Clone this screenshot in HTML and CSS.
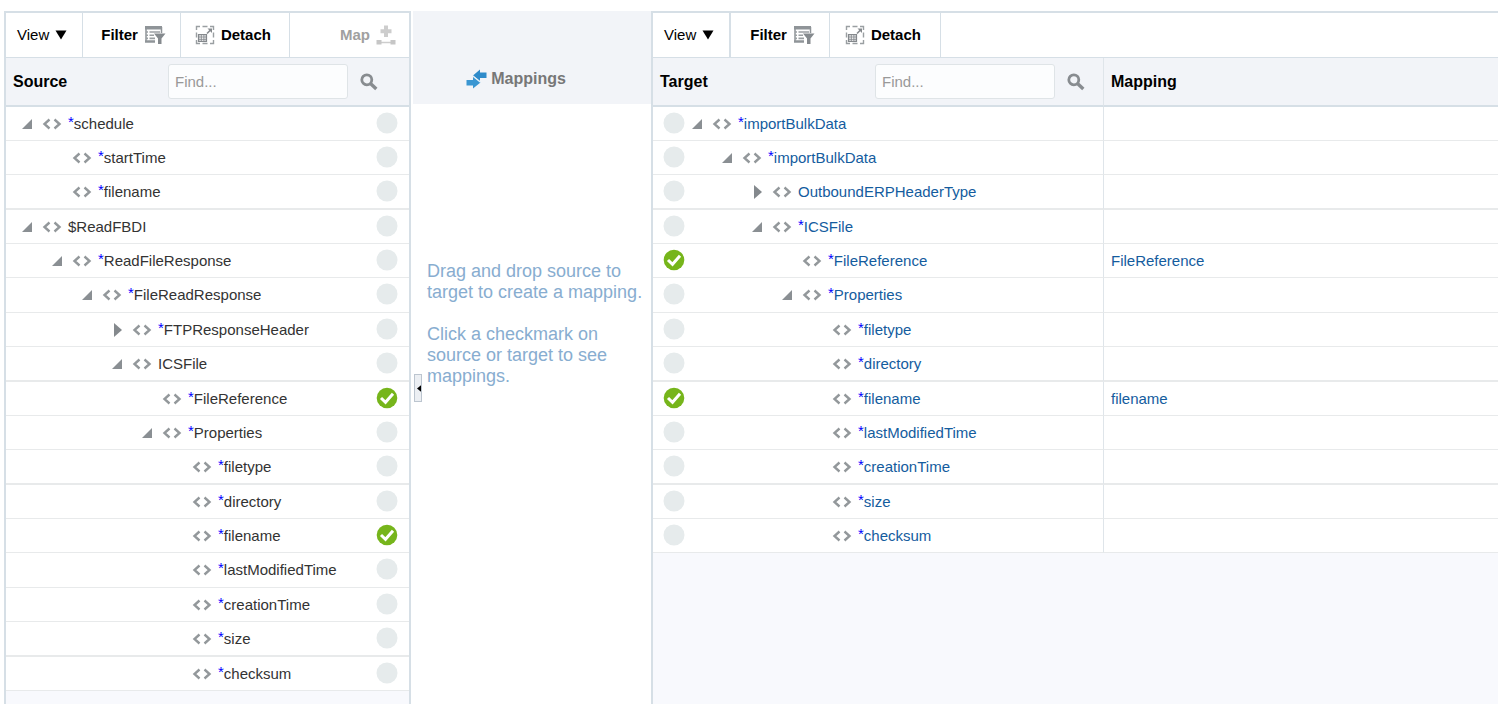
FILE: index.html
```html
<!DOCTYPE html>
<html lang="en">
<head>
<meta charset="utf-8">
<title>Mappings</title>
<link rel="stylesheet" href="styles.css">
</head>
<body>
<svg class="sprite" aria-hidden="true">
  <symbol id="open" viewBox="0 0 12 12"><path d="M1 11L11 1V11Z" fill="#8a8f93"/></symbol>
  <symbol id="closed" viewBox="0 0 12 14"><path d="M3 0L11 7L3 14Z" fill="#84898d"/></symbol>
  <symbol id="code" viewBox="0 0 20 12"><path d="M7.500 1.500L2.500 6L7.500 10.500M12.500 1.500L17.500 6L12.500 10.500" fill="none" stroke="#93989b" stroke-width="2.400"/></symbol>
  <symbol id="empty" viewBox="0 0 22 22"><circle cx="11" cy="11" r="10.500" fill="#e6ebec"/></symbol>
  <symbol id="check" viewBox="0 0 22 22"><circle cx="11" cy="11" r="10.300" fill="#76b51b"/><path d="M5 11L9.500 15.300L17 6.800" fill="none" stroke="#fff" stroke-width="3"/></symbol>
  <symbol id="search" viewBox="0 0 18 18"><circle cx="6.800" cy="6.800" r="5" fill="none" stroke="#888c90" stroke-width="2.800"/><path d="M10.500 10.500L16.300 16" stroke="#888c90" stroke-width="3.400"/></symbol>
  <symbol id="caret" viewBox="0 0 12 10"><path d="M0.500 0.500H11.500L6 9.500Z" fill="#000"/></symbol>
  <symbol id="filter" viewBox="0 0 22 20"><path d="M1 1H18V4.500H1Z" fill="#8f9498"/><path d="M2 2V17M17.500 2V8" fill="none" stroke="#8f9498" stroke-width="1.500"/><path d="M1 16.500H11" stroke="#8f9498" stroke-width="2.500"/><path d="M5.500 7H16M5.500 10.200H10M5.500 13.400H11" stroke="#9a9fa2" stroke-width="1.600"/><path d="M2 7H4M2 10.200H4M2 13.400H4" stroke="#9a9fa2" stroke-width="1.600"/><path d="M10 8.500H21.500L17.500 13.500V19H14V13.500Z" fill="#858a8e"/></symbol>
  <symbol id="detach" viewBox="0 0 20 20"><path d="M1.500 5V1.500H5M15 1.500H18.500V5M18.500 15V18.500H15M5 18.500H1.500V15M7.500 1.500H12.500M7.500 18.500H12.500M1.500 7.500V12.500M18.500 7.500V12.500" fill="none" stroke="#9a9fa2" stroke-width="1.400"/><path d="M3.600 9.600H11.400V16.400H3.600Z" fill="none" stroke="#85898d" stroke-width="1.400"/><path d="M3.500 12H11.500M3.500 14.300H11.500M6.300 10V16.500M8.900 10V16.500" fill="none" stroke="#85898d" stroke-width="0.900"/><path d="M12 8.500L15.500 5" stroke="#85898d" stroke-width="1.600"/><path d="M12.500 3.500H17V8Z" fill="#85898d"/></symbol>
  <symbol id="map" viewBox="0 0 20 20"><path d="M10 0.500V12M4.500 6.200H15.500" stroke="#cdcdcd" stroke-width="4"/><path d="M4 17.500H16" stroke="#cdcdcd" stroke-width="1.500"/><path d="M0.500 15H5.500V19.500H0.500ZM14.500 15H19.500V19.500H14.500Z" fill="#c6c6c6"/></symbol>
  <symbol id="arrows" viewBox="0 0 21 20"><path d="M20.500 3.500H14V0.500L7 6.500L14 12V9H20.500Z" fill="#2f8bca"/><path d="M0.500 11H7V7.500L14.500 13.500L7 19.500V16.500H0.500Z" fill="#3a96d2"/><path d="M6.500 6.800L14.500 13.200" stroke="#e6f0f8" stroke-width="1.200"/></symbol>
</svg>
<main class="mapper">
  <section class="panel source" aria-label="Source">
    <div class="toolbar">
      <button class="tool view">View <svg class="i-caret"><use href="#caret"/></svg></button>
      <button class="tool filter">Filter <svg class="i-filter"><use href="#filter"/></svg></button>
      <button class="tool detach"><svg class="i-tool"><use href="#detach"/></svg> Detach</button>
      <button class="tool map" disabled>Map <svg class="i-tool"><use href="#map"/></svg></button>
    </div>
    <table class="tree">
      <colgroup><col><col class="col-mark"></colgroup>
      <thead>
        <tr><th colspan="2"><div class="head"><label for="find-source">Source</label><input id="find-source" class="find" type="text" placeholder="Find..."><button class="go" aria-label="Search source"><svg class="i-search"><use href="#search"/></svg></button></div></th></tr>
      </thead>
      <tbody>
        <tr><td><div class="node d0"><button class="toggle" aria-label="Collapse"><svg><use href="#open"/></svg></button><svg class="i-code"><use href="#code"/></svg><span><i>*</i>schedule</span></div></td><td><svg class="mark"><use href="#empty"/></svg></td></tr>
        <tr><td><div class="node d1"><span class="toggle"></span><svg class="i-code"><use href="#code"/></svg><span><i>*</i>startTime</span></div></td><td><svg class="mark"><use href="#empty"/></svg></td></tr>
        <tr><td><div class="node d1"><span class="toggle"></span><svg class="i-code"><use href="#code"/></svg><span><i>*</i>filename</span></div></td><td><svg class="mark"><use href="#empty"/></svg></td></tr>
        <tr><td><div class="node d0"><button class="toggle" aria-label="Collapse"><svg><use href="#open"/></svg></button><svg class="i-code"><use href="#code"/></svg><span>$ReadFBDI</span></div></td><td><svg class="mark"><use href="#empty"/></svg></td></tr>
        <tr><td><div class="node d1"><button class="toggle" aria-label="Collapse"><svg><use href="#open"/></svg></button><svg class="i-code"><use href="#code"/></svg><span><i>*</i>ReadFileResponse</span></div></td><td><svg class="mark"><use href="#empty"/></svg></td></tr>
        <tr><td><div class="node d2"><button class="toggle" aria-label="Collapse"><svg><use href="#open"/></svg></button><svg class="i-code"><use href="#code"/></svg><span><i>*</i>FileReadResponse</span></div></td><td><svg class="mark"><use href="#empty"/></svg></td></tr>
        <tr><td><div class="node d3"><button class="toggle" aria-label="Expand"><svg><use href="#closed"/></svg></button><svg class="i-code"><use href="#code"/></svg><span><i>*</i>FTPResponseHeader</span></div></td><td><svg class="mark"><use href="#empty"/></svg></td></tr>
        <tr><td><div class="node d3"><button class="toggle" aria-label="Collapse"><svg><use href="#open"/></svg></button><svg class="i-code"><use href="#code"/></svg><span>ICSFile</span></div></td><td><svg class="mark"><use href="#empty"/></svg></td></tr>
        <tr><td><div class="node d4"><span class="toggle"></span><svg class="i-code"><use href="#code"/></svg><span><i>*</i>FileReference</span></div></td><td><button class="mapped" aria-label="Show mapping"><svg class="mark"><use href="#check"/></svg></button></td></tr>
        <tr><td><div class="node d4"><button class="toggle" aria-label="Collapse"><svg><use href="#open"/></svg></button><svg class="i-code"><use href="#code"/></svg><span><i>*</i>Properties</span></div></td><td><svg class="mark"><use href="#empty"/></svg></td></tr>
        <tr><td><div class="node d5"><span class="toggle"></span><svg class="i-code"><use href="#code"/></svg><span><i>*</i>filetype</span></div></td><td><svg class="mark"><use href="#empty"/></svg></td></tr>
        <tr><td><div class="node d5"><span class="toggle"></span><svg class="i-code"><use href="#code"/></svg><span><i>*</i>directory</span></div></td><td><svg class="mark"><use href="#empty"/></svg></td></tr>
        <tr><td><div class="node d5"><span class="toggle"></span><svg class="i-code"><use href="#code"/></svg><span><i>*</i>filename</span></div></td><td><button class="mapped" aria-label="Show mapping"><svg class="mark"><use href="#check"/></svg></button></td></tr>
        <tr><td><div class="node d5"><span class="toggle"></span><svg class="i-code"><use href="#code"/></svg><span><i>*</i>lastModifiedTime</span></div></td><td><svg class="mark"><use href="#empty"/></svg></td></tr>
        <tr><td><div class="node d5"><span class="toggle"></span><svg class="i-code"><use href="#code"/></svg><span><i>*</i>creationTime</span></div></td><td><svg class="mark"><use href="#empty"/></svg></td></tr>
        <tr><td><div class="node d5"><span class="toggle"></span><svg class="i-code"><use href="#code"/></svg><span><i>*</i>size</span></div></td><td><svg class="mark"><use href="#empty"/></svg></td></tr>
        <tr><td><div class="node d5"><span class="toggle"></span><svg class="i-code"><use href="#code"/></svg><span><i>*</i>checksum</span></div></td><td><svg class="mark"><use href="#empty"/></svg></td></tr>
      </tbody>
    </table>
  </section>

  <section class="middle" aria-label="Mappings">
    <h2 class="middle-head"><svg class="i-arrows"><use href="#arrows"/></svg>Mappings</h2>
    <div class="middle-body">
      <button class="collapse" aria-label="Collapse source"><svg viewBox="0 0 5 8"><path d="M5 0V8L0 4Z"/></svg></button>
      <div class="hint">
        <p>Drag and drop source to target to create a mapping.</p>
        <p>Click a checkmark on source or target to see mappings.</p>
      </div>
    </div>
  </section>

  <section class="panel target" aria-label="Target">
    <div class="toolbar">
      <button class="tool view">View <svg class="i-caret"><use href="#caret"/></svg></button>
      <button class="tool filter">Filter <svg class="i-filter"><use href="#filter"/></svg></button>
      <button class="tool detach"><svg class="i-tool"><use href="#detach"/></svg> Detach</button>
    </div>
    <table class="tree">
      <colgroup><col class="col-mark"><col class="col-name"><col></colgroup>
      <thead>
        <tr><th colspan="2"><div class="head"><label for="find-target">Target</label><input id="find-target" class="find" type="text" placeholder="Find..."><button class="go" aria-label="Search target"><svg class="i-search"><use href="#search"/></svg></button></div></th><th class="mapping">Mapping</th></tr>
      </thead>
      <tbody>
        <tr><td><svg class="mark"><use href="#empty"/></svg></td><td><div class="node d0"><button class="toggle" aria-label="Collapse"><svg><use href="#open"/></svg></button><svg class="i-code"><use href="#code"/></svg><a href="#"><i>*</i>importBulkData</a></div></td><td class="mapping"></td></tr>
        <tr><td><svg class="mark"><use href="#empty"/></svg></td><td><div class="node d1"><button class="toggle" aria-label="Collapse"><svg><use href="#open"/></svg></button><svg class="i-code"><use href="#code"/></svg><a href="#"><i>*</i>importBulkData</a></div></td><td class="mapping"></td></tr>
        <tr><td><svg class="mark"><use href="#empty"/></svg></td><td><div class="node d2"><button class="toggle" aria-label="Expand"><svg><use href="#closed"/></svg></button><svg class="i-code"><use href="#code"/></svg><a href="#">OutboundERPHeaderType</a></div></td><td class="mapping"></td></tr>
        <tr><td><svg class="mark"><use href="#empty"/></svg></td><td><div class="node d2"><button class="toggle" aria-label="Collapse"><svg><use href="#open"/></svg></button><svg class="i-code"><use href="#code"/></svg><a href="#"><i>*</i>ICSFile</a></div></td><td class="mapping"></td></tr>
        <tr><td><button class="mapped" aria-label="Show mapping"><svg class="mark"><use href="#check"/></svg></button></td><td><div class="node d3"><span class="toggle"></span><svg class="i-code"><use href="#code"/></svg><a href="#"><i>*</i>FileReference</a></div></td><td class="mapping"><a href="#">FileReference</a></td></tr>
        <tr><td><svg class="mark"><use href="#empty"/></svg></td><td><div class="node d3"><button class="toggle" aria-label="Collapse"><svg><use href="#open"/></svg></button><svg class="i-code"><use href="#code"/></svg><a href="#"><i>*</i>Properties</a></div></td><td class="mapping"></td></tr>
        <tr><td><svg class="mark"><use href="#empty"/></svg></td><td><div class="node d4"><span class="toggle"></span><svg class="i-code"><use href="#code"/></svg><a href="#"><i>*</i>filetype</a></div></td><td class="mapping"></td></tr>
        <tr><td><svg class="mark"><use href="#empty"/></svg></td><td><div class="node d4"><span class="toggle"></span><svg class="i-code"><use href="#code"/></svg><a href="#"><i>*</i>directory</a></div></td><td class="mapping"></td></tr>
        <tr><td><button class="mapped" aria-label="Show mapping"><svg class="mark"><use href="#check"/></svg></button></td><td><div class="node d4"><span class="toggle"></span><svg class="i-code"><use href="#code"/></svg><a href="#"><i>*</i>filename</a></div></td><td class="mapping"><a href="#">filename</a></td></tr>
        <tr><td><svg class="mark"><use href="#empty"/></svg></td><td><div class="node d4"><span class="toggle"></span><svg class="i-code"><use href="#code"/></svg><a href="#"><i>*</i>lastModifiedTime</a></div></td><td class="mapping"></td></tr>
        <tr><td><svg class="mark"><use href="#empty"/></svg></td><td><div class="node d4"><span class="toggle"></span><svg class="i-code"><use href="#code"/></svg><a href="#"><i>*</i>creationTime</a></div></td><td class="mapping"></td></tr>
        <tr><td><svg class="mark"><use href="#empty"/></svg></td><td><div class="node d4"><span class="toggle"></span><svg class="i-code"><use href="#code"/></svg><a href="#"><i>*</i>size</a></div></td><td class="mapping"></td></tr>
        <tr><td><svg class="mark"><use href="#empty"/></svg></td><td><div class="node d4"><span class="toggle"></span><svg class="i-code"><use href="#code"/></svg><a href="#"><i>*</i>checksum</a></div></td><td class="mapping"></td></tr>
      </tbody>
    </table>
  </section>
</main>
</body>
</html>
```
FILE: styles.css
```css
* { box-sizing: border-box; }
body {
  margin: 0;
  background: #fff;
  color: #333;
  font: 15px/18px "Liberation Sans", Arial, sans-serif;
}
button { margin: 0; padding: 0; border: 0; background: none; font: inherit; color: inherit; cursor: pointer; }
svg { display: block; flex: none; }
a { color: #145c9e; text-decoration: none; }
.sprite { position: absolute; width: 0; height: 0; }

.mapper {
  display: grid;
  grid-template-columns: 407px 240px minmax(0, 1fr);
  min-height: 100vh;
  padding: 11px 0 0 4px;
}
.panel { background: #f8f9fd; border: 2px solid #d6dfe6; border-bottom: 0; }
.target { border-right: 0; }

.toolbar {
  display: flex;
  height: 45px;
  background: #fff;
  border-bottom: 1px solid #d6dfe6;
}
.tool {
  display: flex;
  align-items: center;
  gap: 6px;
  border-right: 1px solid #d6dfe6;
  color: #000;
  font-weight: bold;
}
.view { padding: 0 15px 0 11px; font-weight: normal; }
.filter { padding: 0 14px 0 18px; }
.detach { padding: 0 18px 0 14px; }
.map { flex: 1; justify-content: flex-end; padding-right: 13px; border: 0; color: #a0a0a0; }
.target .view { border-right-width: 2px; }
.target .filter { padding-left: 19px; }
.target .detach { padding: 0 19px 0 15px; }
.i-caret { width: 12px; height: 10px; }
.i-filter { width: 22px; height: 20px; }
.i-tool { width: 20px; height: 20px; }

.tree { width: 100%; border-collapse: separate; border-spacing: 0; table-layout: fixed; }
.col-mark { width: 38px; }
.col-name { width: 412px; }
th {
  height: 49px;
  padding: 0;
  background: #f2f4f8;
  border-bottom: 2px solid #d6dfe6;
  color: #000;
  font-size: 16px;
  text-align: left;
}
.head { display: flex; align-items: center; padding: 0 18px 0 7px; }
.head label { flex: 1; }
.find {
  width: 180px;
  height: 35px;
  padding: 0 6px;
  border: 1px solid #dfe4e7;
  border-radius: 3px;
  background: #fcfdfe;
  color: #333;
  font: 15px/18px "Liberation Sans", Arial, sans-serif;
}
.find::placeholder { color: #999; opacity: 1; }
.go { margin-left: 12px; }
.source .head { padding-right: 31px; }
.i-search { width: 18px; height: 18px; }

td { height: 34px; padding: 0; background: #fff; border-bottom: 1px solid #e8eaeb; }
tr:nth-child(8n+3) td, tr:nth-child(8n+6) td, tr:nth-child(8n) td { height: 35px; }
tr:nth-child(8n+3) td, tr:nth-child(8n) td { border-bottom-width: 2px; }
.node { display: flex; align-items: center; white-space: nowrap; }
.node i { color: #00f; font-style: normal; line-height: 0; vertical-align: 2px; }
.source .d0 { padding-left: 15px; }
.source .d1 { padding-left: 45px; }
.source .d2 { padding-left: 75px; }
.source .d3 { padding-left: 105px; }
.source .d4 { padding-left: 135px; }
.source .d5 { padding-left: 165px; }
.target .d1 { padding-left: 30px; }
.target .d2 { padding-left: 60px; }
.target .d3 { padding-left: 90px; }
.target .d4 { padding-left: 120px; }
.toggle { flex: none; width: 12px; margin-right: 9px; }
.toggle svg { width: 12px; height: 14px; }
.i-code { width: 20px; height: 12px; margin-right: 6px; }
.mark { width: 22px; height: 22px; margin-bottom: 2px; }
.source .mark { margin-left: 5px; }
.target .mark { margin-left: 10px; }
.mapped { display: block; }
.mapping { padding-left: 7px; border-left: 1px solid #dfe5ea; }

.middle { display: flex; flex-direction: column; padding: 0 0 0 2px; }
.middle-head {
  display: flex;
  align-items: flex-end;
  justify-content: center;
  gap: 4px;
  height: 93px;
  margin: 0;
  padding: 0 32px 15px 0;
  background: #f2f4f8;
  color: #777;
  font-size: 16px;
  line-height: 20px;
}
.i-arrows { width: 21px; height: 20px; }
.middle-body { display: flex; align-items: flex-start; padding-top: 157px; }
.collapse {
  display: flex;
  align-items: center;
  justify-content: flex-end;
  width: 8px;
  height: 28px;
  margin: 113px 5px 0 1px;
  border: 1px solid #bcc5cf;
  background: #eceff3;
}
.collapse svg { width: 4px; height: 7px; }
.hint { flex: 1; color: #88add0; font-size: 18px; line-height: 21px; }
.hint p { margin: 0 0 21px; }
```
